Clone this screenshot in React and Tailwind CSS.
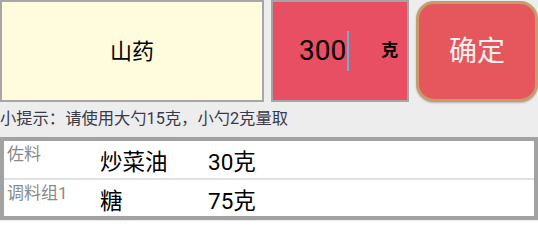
import React from "react";

const rows = [
  { group: "佐料", name: "炒菜油", amount: "30克" },
  { group: "调料组1", name: "糖", amount: "75克" },
];

export default function App() {
  return (
    <div
      className="w-[538px] h-[221px] bg-[#ededed] overflow-hidden"
      style={{ fontFamily: "Roboto, 'Noto Sans CJK SC', sans-serif" }}
    >
      {/* top row: name / amount / confirm */}
      <div className="flex h-[102px] items-start">
        <div className="w-[264px] h-[102px] border-2 border-[#a7a7a7] bg-[#fffcdd] flex items-center justify-center text-[22px] text-black">
          山药
        </div>
        <div className="ml-[7px] w-[138px] h-[102px] border-2 border-[#a4a4a4] bg-[#e94f63] flex items-center">
          <span className="ml-[26px] text-[28px] leading-none text-black">300</span>
          <span className="ml-[1px] w-[2px] h-[40px] bg-[#6aaed6]"></span>
          <span className="ml-[32px] text-[17px] font-bold text-black">克</span>
        </div>
        <button className="ml-[7px] mt-[1px] w-[122px] h-[101px] rounded-[18px] border-[3px] border-[#c59d6c] bg-[#e5575c] text-[28px] text-[#f6f0ee] shadow-[0_1px_2px_rgba(0,0,0,0.25)]">
          确定
        </button>
      </div>

      {/* hint */}
      <div className="h-[35px] flex items-center text-[16.3px] text-[#393a48]">
        小提示：请使用大勺15克，小勺2克量取
      </div>

      {/* ingredient table */}
      <div className="w-[538px] h-[83px] border-4 border-[#a2a2a2] bg-white">
        {rows.map((r, i) => (
          <div
            key={r.group}
            className={
              "flex " + (i === 0 ? "h-[39px] border-b-2 border-[#e2e2e2]" : "h-[36px]")
            }
          >
            <div className="w-[96px] pl-[3px] pt-[2px] text-[17px] text-[#8a8a8a] leading-[22px]">
              {r.group}
            </div>
            <div className="w-[108px] pt-[8px] text-[22.5px] text-black leading-[26px]">
              {r.name}
            </div>
            <div className="pt-[8px] text-[22.5px] text-black leading-[26px]">
              {r.amount}
            </div>
          </div>
        ))}
      </div>
    </div>
  );
}
